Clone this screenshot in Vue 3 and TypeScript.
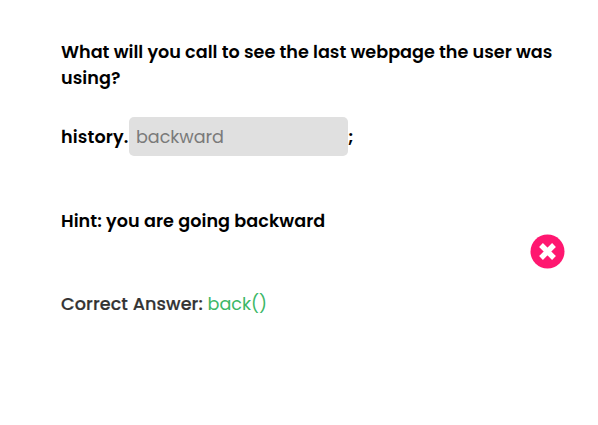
<script setup lang="ts">
const given = 'backward'
const correct = 'back()'
</script>

<template>
  <main class="quiz">
    <div class="content">
      <p class="line q1"><span>What will you call to see the last webpage the user was</span></p>
      <p class="line q2"><span>using?</span></p>
      <div class="code">
        <span class="prefix">history.</span>
        <input class="answer" :value="given" disabled />
        <span class="semi">;</span>
      </div>
      <p class="line hint"><span>Hint: you are going backward</span></p>
      <p class="line result"><span class="label">Correct Answer:</span> <span class="correct">{{ correct }}</span></p>
    </div>
    <svg class="wrong" viewBox="0 0 35 35" aria-label="Incorrect">
      <circle cx="17.5" cy="17.5" r="17" fill="#ff1770" />
      <path d="M11 11L24 24M24 11L11 24" stroke="#fff" stroke-width="5.4" />
    </svg>
  </main>
</template>

<style>
body {
  background: #fff;
}
</style>

<style scoped>
.quiz {
  position: relative;
  box-sizing: border-box;
  height: 425px;
  padding: 39px 30px 0 61px;
  font-family: Poppins, Inter, sans-serif;
  font-size: 17.6px;
  font-weight: 600;
  line-height: 26px;
  color: #000;
}
.line {
  margin: 0;
  height: 26px;
  white-space: nowrap;
}
.q1 {
  letter-spacing: 0.01px;
}
.q2,
.hint {
  letter-spacing: 0.05px;
}
.code {
  display: flex;
  align-items: center;
  height: 39px;
  margin-top: 26px;
}
.prefix {
  width: 68px;
  letter-spacing: 0.12px;
}
.answer {
  box-sizing: border-box;
  width: 219px;
  height: 39px;
  padding: 0 7px;
  border: 0;
  border-radius: 5px;
  background: #e0e0e0;
  color: #7a7a7a;
  font: 400 17.6px Poppins, Inter, sans-serif;
  letter-spacing: -0.05px;
}
.hint {
  margin-top: 52px;
}
.result {
  margin-top: 57px;
  color: #333;
  font-weight: 500;
  letter-spacing: 0.1px;
}
.label {
  -webkit-text-stroke: 0.2px #333;
}
.correct {
  color: #3cb767;
  font-weight: 400;
  letter-spacing: 0;
}
.wrong {
  position: absolute;
  left: 530px;
  top: 234px;
  width: 35px;
  height: 35px;
}
</style>
